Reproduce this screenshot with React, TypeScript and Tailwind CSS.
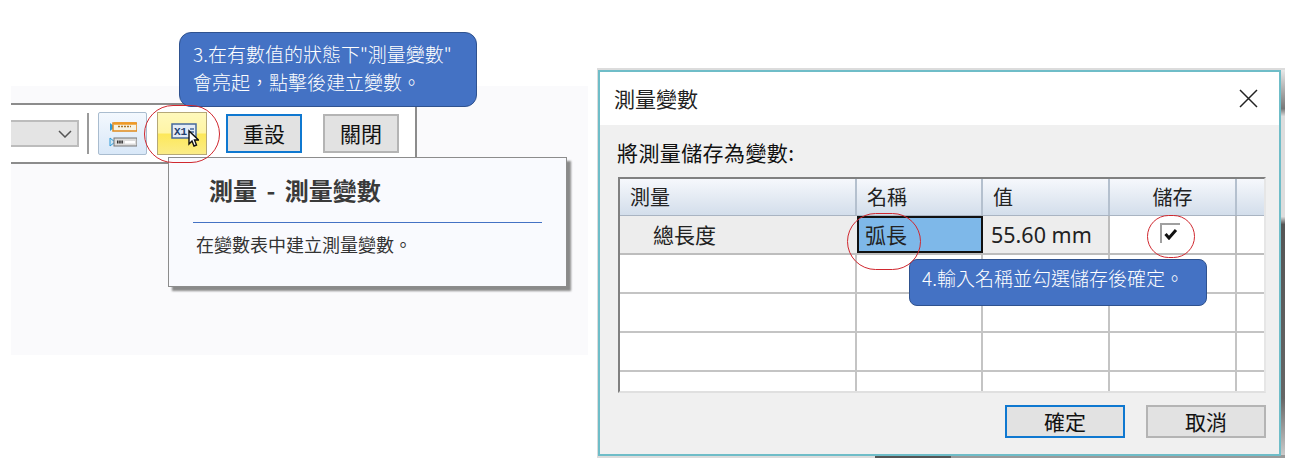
const cjk = "font-['Noto_Sans_CJK_TC','Noto_Sans',sans-serif]";

const rows = [0, 1, 2, 3];

function Ring({ className }: { className: string }) {
    return <div className={`absolute rounded-full border-[1.5px] border-[#d0282f] ${className}`} />;
}

function Bubble({ className, children }: { className: string; children: React.ReactNode }) {
    return (
        <div className={`absolute border border-[#2f528f] bg-[#4472c4] font-light text-white ${className}`}>
            {children}
        </div>
    );
}

function MeasureListIcon() {
    return (
        <svg width="28" height="28" viewBox="0 0 28 28">
            <path d="M1 3v8l5-4z" fill="#2f9bd8" />
            <rect x="4" y="3" width="24" height="8" fill="#f6f3e4" stroke="#e08a1e" strokeWidth="1.5" />
            <path d="M5 3.500h22" stroke="#ef9a25" strokeWidth="2.500" />
            <path d="M9 6.500h13" stroke="#a9762c" strokeWidth="1.500" strokeDasharray="2 1" />
            <path d="M1 18v8l5-4z" fill="#cfe6f4" stroke="#2f9bd8" />
            <rect x="5" y="18" width="23" height="8" fill="#dcdcdc" stroke="#777" />
            <path d="M8 22h6" stroke="#333" strokeWidth="3" strokeDasharray="1.5 .7" />
            <rect x="16" y="21" width="10" height="2.500" fill="#fff" />
        </svg>
    );
}

function VariableIcon() {
    return (
        <svg width="28" height="24" viewBox="0 0 28 24">
            <rect x="1" y="1" width="24" height="14" fill="#e3ebf6" stroke="#47699b" strokeWidth="1.500" />
            <text x="3" y="12" fontSize="11" fontWeight="700" fontFamily="Liberation Mono, monospace" fill="#23406f">
                X1
            </text>
            <path d="M19 6h4M19 9h4" stroke="#47699b" strokeWidth="1.500" />
            <path d="M18 8v13l3-3 2 5 2.500-1-2-5h4z" fill="#fff" stroke="#111" strokeWidth="1.400" />
        </svg>
    );
}

function Toolbar() {
    return (
        <div className="flex h-[61px] w-[406px] items-center border-y-2 border-r-2 border-y-[#8c8c8c] border-r-[#8c8c8c] bg-white">
            <div className="flex h-[27px] w-[68px] items-center justify-end border-2 border-l-0 border-[#bcbcbc] bg-[#e4e4e4] pr-[5px]">
                <svg width="14" height="8" viewBox="0 0 14 8">
                    <path d="M1 1l6 6 6-6" fill="none" stroke="#555" strokeWidth="1.500" />
                </svg>
            </div>
            <div className="ml-[8px] h-[41px] w-[2px] bg-[#9a9a9a]" />
            <div className="ml-[9px] flex h-[43px] w-[49px] items-center justify-center rounded-[2px] border border-[#a9bccf] bg-linear-to-b from-[#f3f8fe] to-[#d9e8f8]">
                <MeasureListIcon />
            </div>
            <div className="ml-[10px] flex h-[43px] w-[50px] items-center justify-center border border-[#b5a878] bg-[linear-gradient(#fff9bc_0%,#fff5a6_48%,#fde85a_52%,#fbec88_100%)] pl-[5px] pt-[3px]">
                <VariableIcon />
            </div>
            <button className="ml-[19px] h-[39px] w-[76px] border-2 border-[#0f78d0] bg-[#e2e2e2] text-[21px] text-[#111]">
                重設
            </button>
            <button className="ml-[21px] h-[39px] w-[76px] border-2 border-[#b4b4b4] bg-[#e2e2e2] text-[21px] text-[#111]">
                關閉
            </button>
        </div>
    );
}

function MeasureTable() {
    const columns = "grid grid-cols-[237px_126px_127px_127px_1fr]";

    return (
        <div className="ml-[18px] h-[216px] w-[648px] overflow-hidden border-x-2 border-y-2 border-t-[#808080] border-l-[#808080] border-r-[#e6e6e6] border-b-[#e0e0e0] bg-white text-[20px] text-[#222]">
            <div className={`${columns} h-[37px] border-b border-[#a9b4c2] bg-linear-to-b from-[#f6f8fc] to-[#d3deeb]`}>
                <div className="border-r-2 border-[#b4c0ce] pl-[10px] leading-[36px]">測量</div>
                <div className="border-r-2 border-[#b4c0ce] pl-[10px] leading-[36px]">名稱</div>
                <div className="border-r-2 border-[#b4c0ce] pl-[10px] leading-[36px]">值</div>
                <div className="border-r-2 border-[#b4c0ce] text-center leading-[36px]">儲存</div>
                <div />
            </div>
            <div className={`${columns} h-[39px] border-b-2 border-[#bdbdbd]`}>
                <div className="bg-[#ededed] pl-[33px] text-[21px] leading-[37px]">總長度</div>
                <div className="border-2 border-[#111] bg-[#7eb8e9] pl-[6px] text-[21px] leading-[33px]">弧長</div>
                <div className="border-r-2 border-[#bdbdbd] bg-[#ededed] pl-[8px] font-['Noto_Sans',sans-serif] text-[21.5px] leading-[37px]">
                    55.60 mm
                </div>
                <div className="flex items-center justify-center border-r-2 border-[#bdbdbd] pb-[3px] pr-[6px]">
                    <div className="flex h-[20px] w-[20px] items-center justify-center border-t-2 border-l-2 border-[#a0a0a0]">
                        <svg width="14" height="12" viewBox="0 0 14 12">
                            <path d="M1.500 6l3.500 4 7-8" fill="none" stroke="#111" strokeWidth="3" />
                        </svg>
                    </div>
                </div>
                <div />
            </div>
            {rows.map((row) => (
                <div key={row} className={`${columns} h-[39px] border-b-2 border-[#c4c4c4]`}>
                    <div className="border-r-2 border-[#c4c4c4]" />
                    <div className="border-r-2 border-[#c4c4c4]" />
                    <div className="border-r-2 border-[#c4c4c4]" />
                    <div className="border-r-2 border-[#c4c4c4]" />
                    <div />
                </div>
            ))}
        </div>
    );
}

function MeasureDialog() {
    return (
        <div className="relative ml-[9px] mt-[68px] h-[390px] w-[688px] bg-[#dcdcdc] pl-[1px] pt-[2px]">
            <div className="absolute right-0 top-[2px] h-[386px] w-[4px] bg-[linear-gradient(#e8e8e8_0%,#777_10%,#ddd_12%,#ddd_38%,#555_40%,#666_85%,#ccc_100%)]" />
            <div className="absolute bottom-0 left-[278px] h-[3px] w-[76px] bg-[#555]" />
            <div className="absolute bottom-0 left-[354px] h-[3px] w-[334px] bg-[#9a9a9a]" />
            <div className="relative flex h-[386px] w-[683px] flex-col border-2 border-[#6fbdc8] bg-white">
                <div className="flex h-[53px] items-center justify-between pl-[14px] pr-[21px] text-[21px] text-[#222]">
                    <span>測量變數</span>
                    <svg width="19" height="19" viewBox="0 0 19 19">
                        <path d="M1 1l17 17M18 1L1 18" stroke="#222" strokeWidth="1.500" />
                    </svg>
                </div>
                <div className="flex flex-1 flex-col bg-[#f0f0f0]">
                    <div className="flex h-[52px] items-center pl-[17px] pt-[4px] text-[21px] tracking-[0.4px] text-[#111]">
                        將測量儲存為變數:
                    </div>
                    <MeasureTable />
                    <div className="mt-[12px] flex justify-end gap-[21px] pr-[13px]">
                        <button className="h-[33px] w-[120px] border-2 border-[#0f78d0] bg-[#e2e2e2] text-[21px] leading-none text-[#111]">
                            確定
                        </button>
                        <button className="h-[33px] w-[120px] border-2 border-[#b4b4b4] bg-[#e2e2e2] text-[21px] leading-none text-[#111]">
                            取消
                        </button>
                    </div>
                </div>
            </div>
        </div>
    );
}

export default function App() {
    return (
        <div className={`relative flex h-[469px] w-[1299px] items-start overflow-hidden bg-white ${cjk}`}>
            <div className="ml-[11px] mt-[86px] h-[269px] w-[577px] bg-[#fafafc] pt-[17px]">
                <Toolbar />
            </div>
            <MeasureDialog />

            <div className="absolute left-[168px] top-[157px] h-[130px] w-[399px] border border-[#8c8c8c] bg-[#f9fafe] px-[24px] shadow-[4px_4px_2px_#8a8a8a]">
                <div className="flex h-[65px] items-center border-b border-[#4472c4] pl-[16px] text-[24px] font-bold text-[#3a3a3a] [word-spacing:4px]">
                    測量 - 測量變數
                </div>
                <div className="mt-[9px] pl-[3px] text-[18px] leading-[24px] text-[#333]">在變數表中建立測量變數。</div>
            </div>

            <Bubble className="left-[179px] top-[32px] h-[75px] w-[298px] rounded-[12px] pl-[13px] pt-[7px] text-[19px] leading-[28px]">
                <p>3.在有數值的狀態下"測量變數"</p>
                <p>{"會亮起\uFF0C點擊後建立變數。"}</p>
            </Bubble>
            <Bubble className="left-[909px] top-[259px] h-[47px] w-[298px] rounded-[8px] pl-[12px] pt-[4px] text-[19px] leading-[28px]">
                4.輸入名稱並勾選儲存後確定。
            </Bubble>

            <Ring className="left-[144px] top-[105px] h-[58px] w-[76px]" />
            <Ring className="left-[847px] top-[213px] h-[57px] w-[74px]" />
            <Ring className="left-[1147px] top-[215px] h-[43px] w-[48px]" />
        </div>
    );
}
